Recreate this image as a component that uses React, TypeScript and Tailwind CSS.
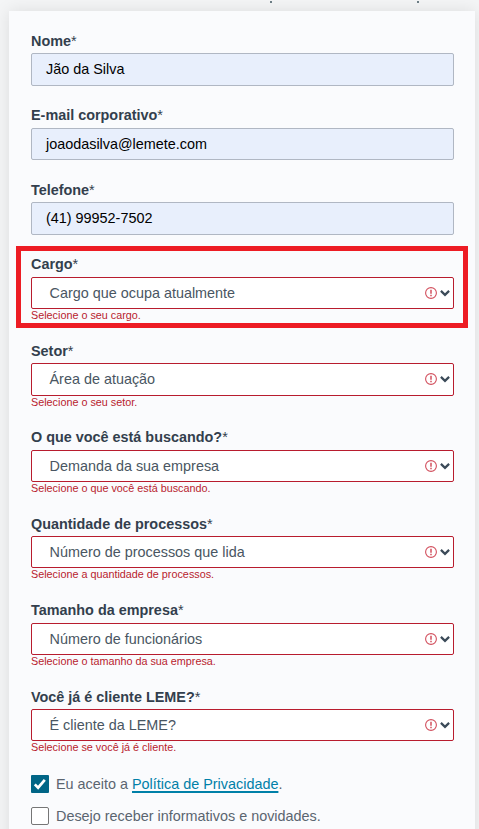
type FieldProps = { label: string; value: string };
type ChoiceProps = { label: string; placeholder: string; error: string; highlighted?: boolean };

const textFields: FieldProps[] = [
  { label: 'Nome', value: 'Jão da Silva' },
  { label: 'E-mail corporativo', value: 'joaodasilva@lemete.com' },
  { label: 'Telefone', value: '(41) 99952-7502' },
];

const choices: ChoiceProps[] = [
  { label: 'Cargo', placeholder: 'Cargo que ocupa atualmente', error: 'Selecione o seu cargo.', highlighted: true },
  { label: 'Setor', placeholder: 'Área de atuação', error: 'Selecione o seu setor.' },
  { label: 'O que você está buscando?', placeholder: 'Demanda da sua empresa', error: 'Selecione o que você está buscando.' },
  { label: 'Quantidade de processos', placeholder: 'Número de processos que lida', error: 'Selecione a quantidade de processos.' },
  { label: 'Tamanho da empresa', placeholder: 'Número de funcionários', error: 'Selecione o tamanho da sua empresa.' },
  { label: 'Você já é cliente LEME?', placeholder: 'É cliente da LEME?', error: 'Selecione se você já é cliente.' },
];

function Label({ text }: { text: string }) {
  return (
    <div className="mb-0.5 h-5 pt-[0.5px] font-bold leading-[19px] text-[#333f4d]">
      {text}
      <span className="font-normal">*</span>
    </div>
  );
}

function TextField({ label, value }: FieldProps) {
  return (
    <div className="h-[74.5px]">
      <Label text={label} />
      <div className="flex h-[32.2px] items-center rounded-[2px] border border-[#b0b7c3] bg-[#e8effc] pl-3.5 pt-[1.3px] text-black">
        {value}
      </div>
    </div>
  );
}

function ChoiceField({ label, placeholder, error, highlighted }: ChoiceProps) {
  return (
    <div className="relative h-[86.45px]">
      {highlighted && (
        <div className="absolute -left-[15px] -top-[9px] h-[82px] w-[452px] border-[5px] border-[#ed1c24]" />
      )}
      <Label text={label} />
      <div className="flex h-[32.2px] items-center rounded-[2px] border border-[#b81c2e] bg-white pl-[17.5px] pr-[3px] text-[#495662]">
        <span className="flex-1 pt-[1.2px]">{placeholder}</span>
        <svg className="mr-[3px] h-3 w-3" viewBox="0 0 12 12" fill="none" stroke="#d2505e">
          <circle cx="6" cy="6" r="5.4" strokeWidth="1.1" />
          <path d="M6 2.8v4M6 7.8v1.4" strokeWidth="1.5" />
        </svg>
        <svg className="h-2.5 w-2.5" viewBox="0 0 10 10" fill="none" stroke="#3b4a58" strokeWidth="2.2">
          <path d="M.9 2.9 5 6.9l4.1-4" />
        </svg>
      </div>
      <div className="text-[10.8px] leading-[13px] text-[#b81c2e]">{error}</div>
    </div>
  );
}

export default function App() {
  return (
    <div className="h-[829px] w-[479px] overflow-hidden bg-[#f4f5f6] font-['Liberation_Sans',Arial,sans-serif] text-[14.4px]">
      <div className="flex h-[11px] items-start pl-[270px] pt-px">
        <span className="h-0.5 w-0.5 bg-[#6c7d85]" />
        <span className="ml-[145px] h-0.5 w-0.5 bg-[#6c7d85]" />
      </div>
      <main className="ml-[9px] h-[850px] w-[466px] bg-[#fafbfd] pl-[22px] pr-[21px] pt-[20.4px] shadow-[0_0_16px_rgba(0,0,0,0.1)]">
        {textFields.map((f) => (
          <TextField key={f.label} {...f} />
        ))}
        {choices.map((c) => (
          <ChoiceField key={c.label} {...c} />
        ))}
        <div className="mt-[1.4px] flex h-[18px] items-center text-[#5b6570]">
          <span className="mr-[7px] flex h-[18px] w-[18px] items-center justify-center rounded-[1px] bg-[#006586]">
            <svg className="h-[14px] w-[14px]" viewBox="0 0 14 14" fill="none" stroke="white" strokeWidth="2.7">
              <path d="m1.8 7.4 3.3 3.3 6.7-7.8" />
            </svg>
          </span>
          <span className="pt-[1.5px]">
            Eu aceito a{' '}
            <a className="text-[#0080a8] underline decoration-2 underline-offset-2 [text-decoration-skip-ink:none]">
              Política de Privacidade
            </a>
            .
          </span>
        </div>
        <div className="mt-[13.6px] flex h-[18px] items-center text-[#5b6570]">
          <span className="mr-[7px] h-[18px] w-[18px] rounded-[2px] border border-[#767676] bg-white" />
          <span className="pt-[2.7px]">Desejo receber informativos e novidades.</span>
        </div>
      </main>
    </div>
  );
}
